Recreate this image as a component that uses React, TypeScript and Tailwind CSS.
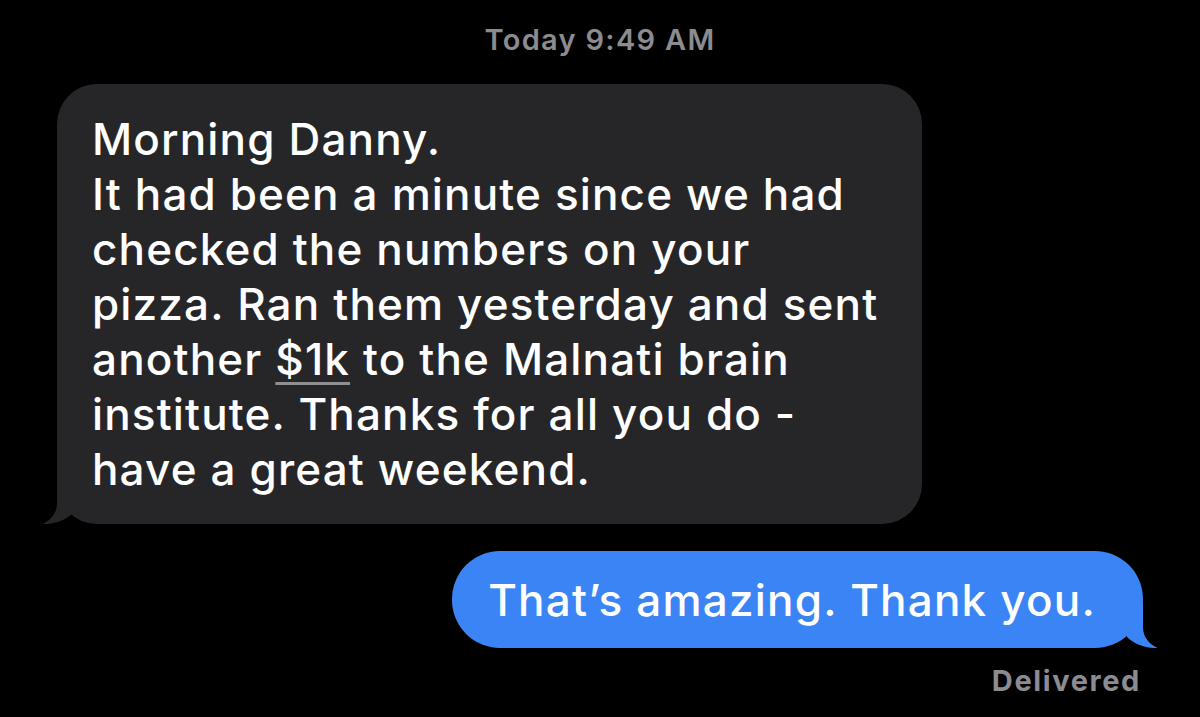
export default function App() {
  const lines = [
    "It had been a minute since we had",
    "checked the numbers on your",
    "pizza. Ran them yesterday and sent",
  ];

  return (
    <main
      className="h-[717px] w-[1200px] bg-black text-white flex flex-col overflow-hidden"
      style={{ fontFamily: "Inter, 'Noto Sans', sans-serif" }}
    >
      {/* timestamp */}
      <div className="pt-[23px] text-center text-[29px] font-semibold leading-[34px] tracking-[1.3px] text-[#8b8b90]">
        Today 9:49 AM
      </div>

      {/* incoming */}
      <div className="relative mt-[27px] ml-[57px] w-[865px] rounded-[40px] bg-[#262628] pl-[35px] pr-[20px] pt-[28px] pb-[27px] text-[44px] font-medium leading-[55px] tracking-[1.15px]">
        <div>Morning Danny.</div>
        {lines.map((l) => (
          <div key={l} className="whitespace-nowrap">{l}</div>
        ))}
        <div className="whitespace-nowrap">
          another{" "}
          <span className="underline decoration-[#8e8e93] decoration-[3px] underline-offset-[7px]">
            $1k
          </span>{" "}
          to the Malnati brain
        </div>
        <div className="whitespace-nowrap">institute. Thanks for all you do -</div>
        <div>have a great weekend.</div>

        <svg
          className="absolute left-[-15px] bottom-0"
          width="40"
          height="45"
          viewBox="0 0 40 45"
        >
          <path
            d="M15 0 L15 24 C15 34 9 41 0.5 45 C12 45.5 24 41 31 34 L31 0 Z"
            fill="#262628"
          />
        </svg>
      </div>

      {/* outgoing */}
      <div className="mt-[27px] mr-[57px] self-end">
        <div className="relative h-[97px] rounded-[48px] bg-[#3b84f5] pl-[36px] pr-[47px] flex items-center text-[44px] font-medium tracking-[1.2px] whitespace-nowrap">
          That’s amazing. Thank you.
          <svg
            className="absolute right-[-15px] bottom-0"
            width="40"
            height="45"
            viewBox="0 0 40 45"
          >
            <path
              d="M25 0 L25 24 C25 34 31 41 39.5 45 C28 45.5 16 41 9 34 L9 0 Z"
              fill="#3b84f5"
            />
          </svg>
        </div>
        <div className="mt-[16px] pr-[2px] text-right text-[29px] font-bold leading-[34px] tracking-[1.6px] text-[#8b8b90]">
          Delivered
        </div>
      </div>
    </main>
  );
}
